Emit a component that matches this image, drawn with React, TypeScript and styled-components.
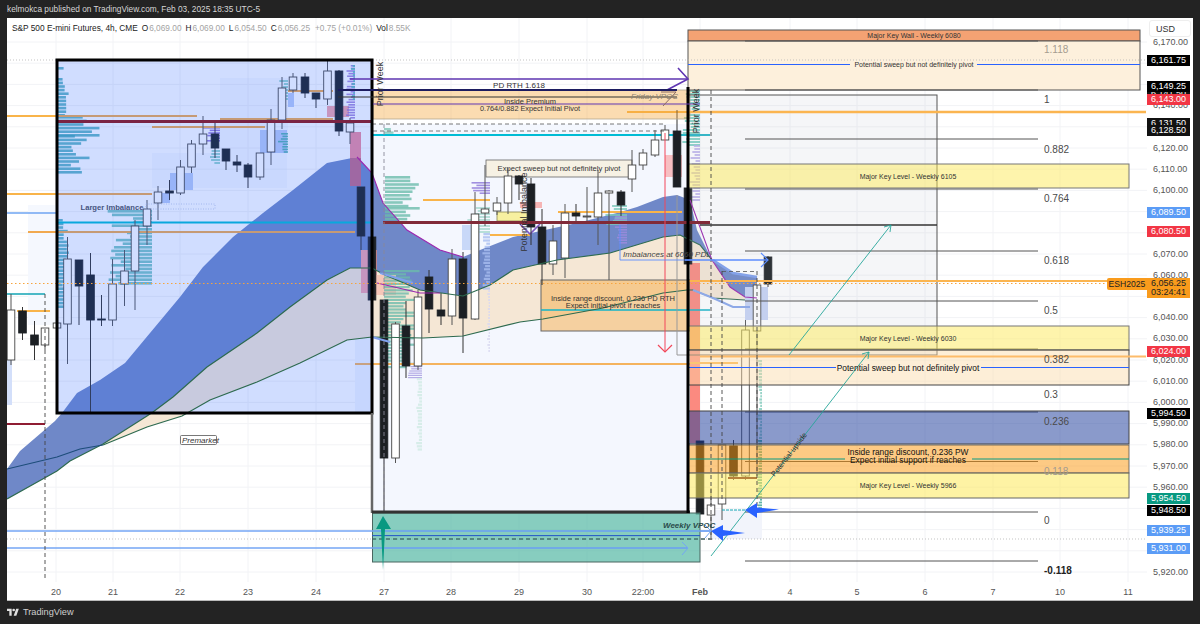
import styled, { createGlobalStyle } from 'styled-components';

const GlobalStyle = createGlobalStyle`
  html, body { margin: 0; padding: 0; background: #232323; }
  body { font-family: "Liberation Sans", Arial, sans-serif; }
`;

const Page = styled.div`
  width: 1200px;
  height: 624px;
  display: flex;
  flex-direction: column;
  overflow: hidden;
  background: #232323;
`;

const TopBar = styled.div`
  height: 18px;
  padding-left: 7px;
  display: flex;
  align-items: center;
  font-size: 8.3px;
  color: #d6d6d6;
`;

const Card = styled.div`
  flex: 1;
  margin: 0 7px;
  background: #fff;
  display: grid;
  grid-template-columns: 1140px 46px;
  grid-template-rows: 564px 18px;
  border-bottom: 1px solid #bbb;
  box-sizing: border-box;
`;

const Pane = styled.div`
  position: relative;
  overflow: hidden;
`;

const ChartSvg = styled.svg`
  display: block;
  font-family: "Liberation Sans", Arial, sans-serif;
`;

const Legend = styled.div`
  position: absolute;
  left: 5px;
  top: 5px;
  display: flex;
  gap: 4px;
  font-size: 8.3px;
  color: #333;
  white-space: nowrap;
`;

const LegendItem = styled.span`
  color: #222;
`;

const LegendValue = styled.span`
  color: #a3a3a3;
  margin-left: 1px;
`;

const SymbolTag = styled.div`
  position: absolute;
  right: 0;
  top: 260px;
  width: 40px;
  height: 12px;
  line-height: 12px;
  text-align: center;
  font-size: 8.6px;
  color: #222;
  background: #f99b1c;
  border-radius: 2px 0 0 2px;
`;

const PriceAxis = styled.div`
  position: relative;
  overflow: hidden;
`;

const UsdButton = styled.div`
  position: absolute;
  left: 2px;
  top: 2px;
  width: 42px;
  height: 17px;
  line-height: 17px;
  padding-left: 6px;
  box-sizing: border-box;
  border: 1px solid #eee;
  border-radius: 3px;
  font-size: 9px;
  color: #333;
  background: #fff;
`;

const PriceTick = styled.div`
  position: absolute;
  left: 6px;
  font-size: 9px;
  line-height: 10px;
  color: #555;
`;

const PriceTag = styled.div<{ $bg: string }>`
  position: absolute;
  left: 0;
  width: 43px;
  height: 11px;
  line-height: 11px;
  text-align: center;
  font-size: 9px;
  color: #fff;
  background: ${(p) => p.$bg};
`;

const LastPriceTag = styled.div`
  position: absolute;
  left: 0;
  top: 260px;
  width: 43px;
  height: 20px;
  padding-top: 1px;
  box-sizing: border-box;
  text-align: center;
  font-size: 9px;
  line-height: 9.5px;
  color: #222;
  background: #f99b1c;
`;

const TimeAxis = styled.div`
  position: relative;
  grid-column: 1 / 3;
`;

const TimeTick = styled.span<{ $bold?: boolean }>`
  position: absolute;
  top: 5px;
  transform: translateX(-50%);
  font-size: 9px;
  color: #555;
  font-weight: ${(p) => (p.$bold ? 700 : 400)};
`;

const BottomBar = styled.div`
  height: 24px;
  padding-left: 7px;
  display: flex;
  align-items: center;
  gap: 4px;
  font-size: 9.2px;
  color: #cfcfcf;
`;

const ZoneLabel = styled.text<{ $size?: number; $color?: string; $bold?: boolean }>`
  font-size: ${(p) => p.$size ?? 7.5}px;
  fill: ${(p) => p.$color ?? '#333'};
  font-weight: ${(p) => (p.$bold ? 700 : 400)};
  text-anchor: middle;
`;

const NoteLabel = styled.text<{ $color?: string; $bold?: boolean }>`
  font-size: 8px;
  font-style: italic;
  fill: ${(p) => p.$color ?? '#444'};
  font-weight: ${(p) => (p.$bold ? 700 : 400)};
`;

const FibLabel = styled.text<{ $strong?: boolean; $faded?: boolean }>`
  font-size: 10px;
  fill: ${(p) => (p.$faded ? '#a59c90' : p.$strong ? '#222' : '#4a4a4a')};
  font-weight: ${(p) => (p.$strong ? 700 : 400)};
`;

const SideLabel = styled.text`
  font-size: 9px;
  fill: #333;
  text-anchor: middle;
`;

type Pt = [number, number];
const toPts = (a: Pt[]) => a.map((p) => p.join(',')).join(' ');

const priceY = (p: number) => 42 + (6170 - p) * 2.12;

const gridX = [56, 113, 180, 248, 316, 384, 451, 519, 587, 643, 700, 790, 857, 925, 993, 1060, 1128];
const timeLabels: [string, number][] = [
  ['20', 56], ['21', 113], ['22', 180], ['23', 248], ['24', 316], ['27', 384], ['28', 451], ['29', 519],
  ['30', 587], ['22:00', 643], ['Feb', 700], ['4', 790], ['5', 857], ['6', 925], ['7', 993], ['10', 1060], ['11', 1128],
];

const priceTicks = [6170, 6140, 6120, 6110, 6100, 6070, 6060, 6040, 6030, 6020, 6010, 6000, 5990, 5980, 5970, 5960, 5920];

const priceTags: [string, number, string][] = [
  ['6,161.75', 60.5, '#000'],
  ['6,141.50', 94, '#111'],
  ['6,149.25', 87, '#000'],
  ['6,143.00', 100, '#f23645'],
  ['6,131.50', 124, '#111'],
  ['6,128.50', 130.5, '#111'],
  ['6,089.50', 213, '#5b9cf6'],
  ['6,080.50', 232, '#f23645'],
  ['6,024.00', 352, '#f23645'],
  ['5,994.50', 414, '#000'],
  ['5,954.50', 499, '#089981'],
  ['5,948.50', 511, '#000'],
  ['5,939.25', 531, '#5b9cf6'],
  ['5,931.00', 548.5, '#5b9cf6'],
];

// cx, body top, body bottom, wick top, wick bottom, dark
type Candle = [number, number, number, number, number, number];
const candles: Candle[] = [
  [11, 310, 360, 294, 365, 0], [22.5, 311, 333, 307, 340, 1], [34.5, 335, 345, 321, 360, 1], [45, 328, 345, 328, 350, 0],
  [57, 323, 328, 323, 328, 0], [67.5, 259, 324, 237, 364, 0], [79, 260, 286, 260, 325, 1], [90.5, 275, 320, 253, 413, 1],
  [101.5, 319, 320, 295, 326, 1], [112.5, 284, 320, 259, 326, 0], [124.5, 271, 284, 250, 306, 0], [135, 226, 271, 220, 310, 0],
  [147, 209, 226, 200, 245, 0], [158, 192, 203, 186, 220, 0], [169.5, 191, 193, 180, 200, 1], [180.5, 167, 193, 160, 195, 0],
  [191.5, 144, 167, 140, 173, 0], [203, 134, 144, 116, 155, 0], [215, 134, 148, 120, 158, 1], [226, 149, 161, 149, 170, 1],
  [237, 162, 165, 155, 172, 1], [248, 165, 177, 163, 188, 1], [260, 153, 177, 153, 180, 0], [271, 120, 152, 109, 165, 0],
  [282, 88, 120, 77, 129, 0], [293, 77, 90, 73, 93, 0], [305, 77, 93, 73, 98, 1], [316, 93, 99, 93, 108, 1],
  [327.5, 71, 99, 60, 105, 0], [339, 71, 131, 70, 136, 1], [350, 123, 132, 118, 144, 0], [361, 187, 236, 187, 250, 1],
  [372, 237, 300, 237, 300, 1],
  [384, 300, 458, 300, 513, 1], [395.5, 324, 458, 322, 463, 0], [406, 326, 366, 301, 378, 1], [418, 297, 366, 290, 370, 0],
  [429, 277, 309, 270, 333, 1], [441, 310, 316, 293, 325, 1], [452, 259, 316, 249, 325, 0], [463, 259, 318, 252, 353, 1],
  [475, 214, 319, 192, 320, 0], [485, 209, 213, 165, 226, 0], [497, 203, 211, 197, 215, 0], [508, 176, 203, 168, 214, 0],
  [519, 176, 184, 175, 200, 1], [531, 184, 227, 178, 245, 1], [542, 227, 264, 209, 285, 1], [553, 241, 264, 225, 275, 0],
  [565, 213, 258, 204, 278, 0], [576, 213, 216, 204, 221, 1], [587, 216, 217, 187, 223, 0], [598, 193, 217, 170, 245, 0],
  [609, 191, 193, 190, 280, 0], [621, 192, 205, 190, 216, 1], [632, 165, 179, 150, 192, 0], [643, 153, 165, 149, 170, 0],
  [655, 140, 155, 130, 157, 0], [665, 130, 140, 125, 140, 0], [677, 131, 187, 110, 187, 1], [688, 188, 264, 90, 265, 1],
  [700, 441, 514, 441, 514, 1], [711, 505, 515, 488, 540, 0], [722, 445, 504, 445, 520, 0], [733.5, 446, 476, 440, 480, 1],
  [745.5, 330, 476, 320, 480, 0], [757, 285, 331, 285, 476, 0], [768, 257, 284, 256, 287, 1],
];

const blueTop: Pt[] = [
  [7, 469], [20, 451], [55, 421], [62, 413], [77, 393], [100, 380], [125, 363], [150, 333], [180, 297], [203, 267], [233, 237],
  [263, 213], [293, 190], [327, 163], [357, 157], [372, 173], [383, 203], [407, 230], [440, 250], [463, 257], [480, 250],
  [513, 237], [577, 223], [617, 213], [637, 207], [663, 197], [677, 195], [690, 200], [697, 230], [712, 260],
];
const greenOne: Pt[] = [
  [7, 499], [57, 471], [70, 461], [103, 444], [147, 416], [153, 412], [173, 397], [207, 367], [257, 333], [290, 307], [327, 280],
  [350, 268], [372, 268], [385, 275], [420, 290], [463, 296], [490, 285], [513, 270], [557, 260], [610, 253], [663, 237], [680, 235],
  [700, 245], [712, 260],
];
const greenTwo: Pt[] = [
  [103, 445], [147, 427], [182, 416], [210, 400], [257, 382], [300, 363], [347, 340], [372, 337], [423, 338], [463, 336], [520, 322],
  [543, 319], [603, 308], [663, 293], [687, 290], [693, 290], [713, 298], [745, 300],
];
const creamEdge: Pt[] = greenOne.slice(3).concat([[730, 287], [745, 297]] as Pt[]);
const blueTail: Pt[] = [[712, 260], [733, 273], [757, 277], [757, 297], [745, 297], [730, 287]];

// x, y1, y2, colour, seed, width, step; bars grow from x, negative width goes left
type Profile = [number, number, number, string, number, number, number];
const profiles: Profile[] = [
  [58, 67, 70, '#3fa5b5', 1, 11, 3.6],
  [58, 78, 115, '#3fa5b5', 2, 11, 3.6],
  [58, 116, 135, '#3fa5b5', 3, 44, 3.6],
  [58, 135, 173, '#3fa5b5', 4, 32, 3.6],
  [58, 219, 307, '#3fa5b5', 5, 11, 3.6],
  [152, 210, 285, '#5cb8b6', 6, -45, 3.6],
  [355, 65, 117, '#8e6fd6', 7, -9, 2.6],
  [355, 65, 100, '#54bdb4', 8, -4, 3],
  [220, 127, 141, '#7d5fd8', 9, -18, 2.6],
  [220, 150, 165, '#7cc8c4', 10, -10, 3],
  [288, 80, 100, '#7cc8c4', 11, -10, 3],
  [288, 133, 153, '#3ca9a0', 12, -10, 2.6],
  [384, 128, 134, '#7ec4b6', 13, 12, 3.4],
  [385, 176, 207, '#6cbcab', 14, 36, 3.6],
  [385, 207, 222, '#6cbcab', 15, 45, 3.6],
  [384, 270, 366, '#6cbcab', 16, 36, 3.2],
  [422, 366, 378, '#a59ae0', 17, -14, 2.2],
  [422, 378, 450, '#cfeae4', 18, -6, 3.2],
  [490, 182, 193, '#8b74d8', 19, -20, 2.6],
  [490, 207, 233, '#a8d8d0', 20, -26, 3],
  [490, 233, 290, '#a7bdf0', 21, -8, 3.2],
  [490, 290, 352, '#d8d8f0', 22, -3, 3],
  [627, 205, 225, '#7cc8bc', 23, -22, 3],
  [627, 216, 242, '#a08be0', 24, -18, 2.6],
  [700, 90, 145, '#6cc8bc', 25, -19, 3],
  [700, 145, 200, '#b9aeea', 26, -10, 3],
  [762, 360, 440, '#7ec9ba', 27, -4, 3.2],
  [762, 440, 512, '#3aa494', 28, -5, 2.8],
];

const pseudo = (i: number, seed: number) => {
  const v = Math.sin(i * 12.9898 + seed * 78.233) * 43758.5453;
  return 0.4 + 0.6 * (v - Math.floor(v));
};

// x1, x2, y, colour, stroke width, dash
type Level = [number, number, number, string, number, string?];
const lowLevels: Level[] = [
  [7, 57, 116, '#f9b44a', 2], [57, 197, 116, '#f1a94f', 2], [152, 265, 127, '#f1a94f', 2], [220, 333, 119, '#f1a94f', 2],
  [288, 333, 91, '#f1a94f', 2], [7, 57, 194, '#f9b44a', 2], [57, 152, 194, '#f1a94f', 2], [28, 355, 232, '#f1a94f', 2],
  [17, 50, 311, '#f9b44a', 2], [355, 690, 364, '#f4b35e', 2], [423, 490, 200, '#f9b44a', 2], [490, 530, 235, '#f9b44a', 2],
  [558, 682, 212, '#f9b44a', 2], [627, 710, 112, '#f9b44a', 2], [690, 738, 363, '#f9b44a', 2],
  [57, 372, 222.5, '#00bcd4', 1.8], [372, 677, 135, '#00bcd4', 2], [677, 710, 135, '#26b6c6', 2],
  [541, 710, 310, '#12b5c9', 1.4], [7, 45, 294, '#12a4b4', 1.6], [7, 57, 213, '#6ea4f2', 1.5],
];

const highLevels: Level[] = [
  [57, 372, 121.5, '#7a2444', 3], [383, 710, 222.5, '#812a38', 3], [7, 45, 424, '#8f1c32', 2],
  [7, 710, 531, '#74a6f4', 1.6], [7, 688, 548, '#74a6f4', 1.6], [372, 700, 535.6, '#2a5cc9', 1],
  [372, 710, 539, '#3b5a5a', 1, '4 3'], [7, 1146, 539, '#b4b4b4', 0.8, '1 2'], [7, 1146, 60, '#b4b4b4', 0.8, '1 2'],
  [372, 665, 124, '#555', 0.8, '4 3'], [373, 665, 131, '#555', 0.8, '4 3'], [722, 757, 271.5, '#555', 0.8, '4 3'],
  [722, 745, 510, '#12a4b4', 1, '3 1'], [689, 1146, 112, '#fbb550', 2.4], [689, 1146, 281, '#fbb550', 2.2],
  [700, 1146, 356.5, '#fdbb6a', 2], [7, 1146, 283.5, '#f7a43c', 1, '1.5 2.5'],
];

const fibLines = [41, 90, 139, 189, 251, 301, 349, 412, 461.5, 512, 561];
const fibLabels: [string, number, boolean?, boolean?][] = [
  ['1.118', 53, false, true], ['1', 103], ['0.882', 153], ['0.764', 202], ['0.618', 264], ['0.5', 314], ['0.382', 363],
  ['0.3', 398], ['0.236', 425], ['0.118', 475, false, true], ['0', 524], ['-0.118', 574, true],
];

function Chevron({ pts, color, w = 1.6 }: { pts: Pt[]; color: string; w?: number }) {
  return <polyline points={toPts(pts)} fill="none" stroke={color} strokeWidth={w} />;
}

function Levels({ items }: { items: Level[] }) {
  return (
    <>
      {items.map(([x1, x2, y, c, w, dash], i) => (
        <line key={i} x1={x1} x2={x2} y1={y} y2={y} stroke={c} strokeWidth={w} strokeDasharray={dash} />
      ))}
    </>
  );
}

function Chart() {
  return (
    <ChartSvg width={1140} height={564} viewBox="7 18 1140 564">
      {gridX.map((x) => (
        <line key={x} x1={x} x2={x} y1={18} y2={582} stroke="#f2f3f6" />
      ))}
      {priceTicks.concat([6160, 6150, 6130, 6090, 6080, 6050, 5950, 5940, 5930]).map((p) => (
        <line key={p} x1={7} x2={1147} y1={priceY(p)} y2={priceY(p)} stroke="#f2f3f6" />
      ))}

      {/* pale session blocks */}
      <rect x={28} y={205} width={29} height={120} fill="#f5f8fe" />
      <rect x={7} y={360} width={5} height={45} fill="#d3dffa" />
      <rect x={355} y={232} width={17} height={180} fill="#f3f6fe" />
      <rect x={372} y={124} width={316} height={388} fill="#f4f7fe" />
      <rect x={712} y={510} width={50} height={29} fill="#f2f4fb" />

      {/* ema ribbon */}
      <polygon points={toPts([...creamEdge, ...[...greenTwo].reverse()])} fill="#f5e7d5" />
      <polygon points={toPts([...blueTop, ...[...greenOne].reverse()])} fill="#6f88c8" />
      <polygon points={toPts(blueTail)} fill="#6f88c8" />

      <rect x={541} y={280} width={149} height={51} fill="#f5b866" fillOpacity={0.62} stroke="#666" />

      {/* liquidity blocks */}
      <rect x={260} y={130} width={27} height={23} fill="#b8cbf8" />
      <rect x={170} y={173} width={23} height={17} fill="#b8cbf8" />
      <rect x={157} y={193} width={13} height={10} fill="#b8cbf8" />
      <rect x={288} y={93} width={6} height={14} fill="#b8cbf8" />
      <rect x={220} y={78} width={68} height={75} fill="#c0cffa" fillOpacity={0.12} />
      <rect x={152} y={153} width={135} height={35} fill="#c0cffa" fillOpacity={0.12} />
      <rect x={462} y={225} width={18} height={25} fill="#c8d8f8" />
      <rect x={520} y={202} width={22} height={6} fill="#f6b5b5" />
      <rect x={665} y={155} width={17} height={22} fill="#f7bfc2" />
      <rect x={745} y={287} width={23} height={33} fill="#c8d4f5" />
      <rect x={327} y={106} width={22} height={11} fill="#f2a5ae" />
      <rect x={350} y={132} width={11} height={54} fill="#ee8ba0" />
      <rect x={350} y={158} width={11} height={28} fill="#c06a8a" />
      <rect x={361} y={250} width={16} height={43} fill="#f3a3ae" />
      <rect x={376} y={275} width={20} height={20} fill="#f5c6b8" />
      <rect x={690} y={263} width={10} height={180} fill="#fb8a80" />

      {profiles.map(([x, y1, y2, color, seed, w, step]) => {
        const bars = [];
        for (let y = y1, i = 0; y < y2; y += step, i++) {
          const len = Math.abs(w) * pseudo(i, seed);
          bars.push(<rect key={i} x={w < 0 ? x - len : x} y={y} width={len} height={step - 1} fill={color} fillOpacity={0.8} />);
        }
        return <g key={seed}>{bars}</g>;
      })}

      <Levels items={lowLevels} />

      {/* note boxes under the candles */}
      <rect x={486} y={160} width={146} height={17} fill="#f6f1e4" stroke="#666" strokeWidth={0.8} />
      <rect x={497} y={212} width={33} height={9} fill="#f7f0a0" stroke="#8a8650" strokeWidth={0.8} />
      <Chevron pts={[[520, 224], [530, 234], [540, 224]]} color="#7e57c2" />

      {candles.map(([cx, top, bottom, wt, wb, dark], i) => (
        <g key={i}>
          <line x1={cx} x2={cx} y1={wt} y2={wb} stroke={dark ? '#333' : '#555'} strokeWidth={1} />
          <rect
            x={cx - 3.8}
            y={top}
            width={7.6}
            height={Math.max(bottom - top, 1)}
            fill={dark ? '#1c2024' : '#fff'}
            stroke={dark ? '#1c2024' : '#444'}
            strokeWidth={0.9}
          />
        </g>
      ))}

      {/* weekly frame tint, goes over the candles */}
      <rect x={57} y={60} width={315} height={353} fill="#2962ff" fillOpacity={0.22} />

      {/* ribbon edges */}
      <polyline points={toPts(greenOne)} fill="none" stroke="#2d6a4f" strokeWidth={1.2} />
      <polyline points={toPts(greenTwo)} fill="none" stroke="#2d6a4f" strokeWidth={1.2} />
      <polyline points={toPts([[7, 469], [57, 457], [80, 449], [103, 445]])} fill="none" stroke="#1d4d7a" strokeWidth={1.2} />
      <polyline points={toPts(blueTop.slice(14, 20))} fill="none" stroke="#9c27b0" strokeWidth={1.1} />
      <polyline points={toPts([[377, 283], [420, 293], [440, 293]])} fill="none" stroke="#9c27b0" strokeWidth={1.1} />
      <polyline points={toPts([[690, 200], [712, 260], [730, 287], [745, 297], [757, 298]])} fill="none" stroke="#9c27b0" strokeWidth={1.1} />
      <polyline points={toPts([[372, 337], [390, 342]])} fill="none" stroke="#7fa0ee" strokeWidth={2} />
      <polyline points={toPts([[380, 273], [413, 283]])} fill="none" stroke="#7fa0ee" strokeWidth={2} />
      <polyline points={toPts([[713, 260], [733, 273], [757, 277]])} fill="none" stroke="#7fa0ee" strokeWidth={2.5} />
      <polyline points={toPts([[693, 290], [713, 298], [733, 307], [750, 307]])} fill="none" stroke="#8aa8ec" strokeWidth={2} />

      {/* premium zone */}
      <rect x={373} y={90} width={317} height={29} fill="#f4a73c" fillOpacity={0.4} stroke="#b3a890" strokeWidth={0.8} />

      {/* right side zones */}
      <rect x={688} y={95} width={249} height={260} fill="#aab4c8" fillOpacity={0.12} stroke="#555" strokeWidth={1} />
      <rect x={688} y={30} width={452} height={11} fill="#f4a273" stroke="#555" strokeWidth={1} />
      <rect x={688} y={41} width={452} height={49} fill="#fdf0dc" stroke="#555" strokeWidth={1} />
      <Levels items={[
        [688, 850, 64.5, '#2962ff', 1], [977, 1140, 64.5, '#2962ff', 1],
        [700, 937, 225, '#333', 1.6],
      ]} />
      {fibLines.map((y) => (
        <line key={y} x1={745} x2={1038} y1={y} y2={y} stroke="#555" strokeWidth={1} />
      ))}
      <rect x={688} y={164} width={441} height={24} fill="#fde95a" fillOpacity={0.5} stroke="#777" strokeWidth={1} />
      <rect x={688} y={326} width={441} height={24} fill="#fde95a" fillOpacity={0.5} stroke="#777" strokeWidth={1} />
      <rect x={688} y={350} width={441} height={35} fill="#fbd9a6" fillOpacity={0.45} stroke="#444" strokeWidth={1} />
      <rect x={688} y={411} width={441} height={33} fill="#1f3d9c" fillOpacity={0.52} stroke="#444" strokeWidth={1} />
      <rect x={688} y={445} width={441} height={28} fill="#fb9a14" fillOpacity={0.52} stroke="#555" strokeWidth={0.8} />
      <rect x={688} y={473} width={441} height={25} fill="#fde95a" fillOpacity={0.55} stroke="#666" strokeWidth={1} />
      <Levels items={[
        [688, 836, 367.5, '#2962ff', 1], [981, 1129, 367.5, '#2962ff', 1],
        [690, 845, 459, '#089981', 1.2], [972, 1129, 459, '#089981', 1.2],
        [728, 757, 478, '#b8813c', 2],
      ]} />

      <Levels items={highLevels} />

      {/* grey box by the Feb open */}
      <polyline points={toPts([[677, 195], [677, 355], [688, 355]])} fill="none" stroke="#999" strokeWidth={1} />

      {/* dashed session marks */}
      <line x1={45} x2={45} y1={294} y2={580} stroke="#444" strokeWidth={0.9} strokeDasharray="4 3" />
      <line x1={384} x2={384} y1={124} y2={513} stroke="#889" strokeWidth={0.9} strokeDasharray="4 3" />
      <line x1={711} x2={711} y1={90} y2={540} stroke="#444" strokeWidth={0.9} strokeDasharray="4 3" />
      <line x1={722} x2={722} y1={271} y2={500} stroke="#444" strokeWidth={0.9} strokeDasharray="4 3" />
      <line x1={757} x2={757} y1={271} y2={510} stroke="#444" strokeWidth={0.9} strokeDasharray="4 3" />

      {/* frames */}
      <rect x={57} y={60} width={315} height={353} fill="none" stroke="#000" strokeWidth={3} />
      <line x1={372} x2={372} y1={413} y2={513} stroke="#666" strokeWidth={2.5} />

      <rect x={372.5} y={513} width={327.5} height={49} fill="#54b8a4" fillOpacity={0.7} stroke="#4a6660" strokeWidth={1} />
      <line x1={372} x2={690} y1={512} y2={512} stroke="#333" strokeWidth={3} />
      <line x1={688} x2={688} y1={87} y2={513} stroke="#000" strokeWidth={3} />
      <Levels items={[
        [372, 711, 531, '#74a6f4', 1.6], [372, 688, 548, '#74a6f4', 1.6], [372, 700, 535.6, '#2a5cc9', 1],
        [372, 710, 539, '#3b5a5a', 1, '4 3'],
      ]} />

      {/* purple PD RTH lines */}
      <line x1={350} x2={688} y1={79} y2={79} stroke="#5e35b1" strokeWidth={1.6} />
      <Chevron pts={[[678, 68], [688, 79], [667, 90]]} color="#5e35b1" />
      <line x1={338} x2={677} y1={90} y2={90} stroke="#1c1c60" strokeWidth={1.8} />
      <line x1={338} x2={677} y1={97} y2={97} stroke="#333" strokeWidth={1.2} />
      <line x1={373} x2={700} y1={104} y2={104} stroke="#5e35b1" strokeWidth={1} />

      {/* arrows */}
      <line x1={665} x2={665} y1={133} y2={352} stroke="#f2475a" strokeWidth={1} />
      <Chevron pts={[[658, 345], [665, 352], [672, 345]]} color="#f2475a" w={1.2} />
      <Chevron pts={[[661, 92], [676, 92], [663, 106]]} color="#8d6e63" w={1} />
      <Chevron pts={[[682, 542], [688, 548], [682, 555]]} color="#74a6f4" w={1} />
      <Chevron pts={[[705, 525], [711, 531], [705, 538]]} color="#74a6f4" w={1} />
      <line x1={685} x2={768} y1={260} y2={260} stroke="#5c8dff" strokeWidth={1.6} />
      <line x1={620} x2={620} y1={225} y2={260} stroke="#5c8dff" strokeWidth={0.9} />
      <line x1={620} x2={700} y1={260} y2={260} stroke="#5c8dff" strokeWidth={0.9} />
      <Chevron pts={[[761, 253], [768, 260], [761, 267]]} color="#5c8dff" w={1.2} />

      <line x1={789} x2={891} y1={355} y2={225} stroke="#26a69a" strokeWidth={0.9} />
      <Chevron pts={[[884, 227], [891, 225], [890, 232]]} color="#26a69a" w={0.9} />
      <line x1={711} x2={869} y1={556} y2={352} stroke="#26a69a" strokeWidth={0.9} />
      <Chevron pts={[[862, 354], [869, 352], [868, 359]]} color="#26a69a" w={0.9} />

      <polygon points={toPts([[745, 510], [757, 503], [757, 507.5], [779, 509.5], [757, 513], [757, 518]])} fill="#2962ff" />
      <polygon points={toPts([[711, 531], [723, 525], [723, 530], [745, 533], [723, 536], [723, 541]])} fill="#2962ff" />
      <polygon points={toPts([[383, 516], [391, 529], [385, 529], [383, 570], [381, 529], [376, 529]])} fill="#089981" />

      {/* labels */}
      <ZoneLabel x={519} y={87.5} $size={8}>PD RTH 1.618</ZoneLabel>
      <ZoneLabel x={530} y={104} $size={7.5}>Inside Premium</ZoneLabel>
      <ZoneLabel x={530} y={111} $size={7.3}>0.764/0.882 Expect Initial Pivot</ZoneLabel>
      <ZoneLabel x={559} y={171} $size={7.6}>Expect sweep but not definitely pivot</ZoneLabel>
      <ZoneLabel x={613} y={301} $size={7.5}>Inside range discount, 0.236 PD RTH</ZoneLabel>
      <ZoneLabel x={613} y={308} $size={7.5}>Expect initial pivot if reaches</ZoneLabel>
      <ZoneLabel x={914} y={38} $size={7}>Major Key Wall - Weekly 6080</ZoneLabel>
      <ZoneLabel x={914} y={67} $size={7}>Potential sweep but not definitely pivot</ZoneLabel>
      <ZoneLabel x={908} y={178.5} $size={7}>Major Key Level - Weekly 6105</ZoneLabel>
      <ZoneLabel x={908} y={340.5} $size={7}>Major Key Level - Weekly 6030</ZoneLabel>
      <ZoneLabel x={908} y={371} $size={8.4} $color="#111">Potential sweep but not definitely pivot</ZoneLabel>
      <ZoneLabel x={908} y={455} $size={8.4} $color="#111">Inside range discount, 0.236 PW</ZoneLabel>
      <ZoneLabel x={908} y={463} $size={8.4} $color="#111">Expect initial support if reaches</ZoneLabel>
      <ZoneLabel x={908} y={487.5} $size={7}>Major Key Level - Weekly 5966</ZoneLabel>
      <ZoneLabel x={112} y={210} $size={7.6} $color="#46557f" $bold>Larger Imbalance</ZoneLabel>
      <rect x={146} y={204} width={69} height={5} fill="none" stroke="#8fa7e8" strokeWidth={0.7} strokeDasharray="1 1.5" />

      <rect x={180.5} y={435.5} width={36} height={9} fill="#fff" stroke="#555" strokeWidth={0.8} rx={1} />
      <NoteLabel x={182} y={443} $color="#333">Premarket</NoteLabel>
      <NoteLabel x={623} y={257}>Imbalances at 6060 PDL</NoteLabel>
      <NoteLabel x={631} y={99} $color="#8a8272">Friday VPOC</NoteLabel>
      <NoteLabel x={663} y={528} $color="#2a4a4a" $bold>Weekly VPOC</NoteLabel>

      <SideLabel transform="translate(382.5 84) rotate(-90)">Prior Week</SideLabel>
      <SideLabel transform="translate(699 111) rotate(-90)">Prior Week</SideLabel>
      <SideLabel transform="translate(527 212) rotate(-90)">Potential Imbalance</SideLabel>
      <ZoneLabel transform="translate(791 456) rotate(-52)" $size={7.5}>Potential upside</ZoneLabel>

      {fibLabels.map(([t, y, strong, faded]) => (
        <FibLabel key={t} x={1044} y={y} $strong={strong} $faded={faded}>{t}</FibLabel>
      ))}
    </ChartSvg>
  );
}

export default function App() {
  return (
    <Page>
      <GlobalStyle />
      <TopBar>kelmokca published on TradingView.com, Feb 03, 2025 18:35 UTC-5</TopBar>
      <Card>
        <Pane>
          <Chart />
          <Legend>
            <LegendItem>S&amp;P 500 E-mini Futures, 4h, CME</LegendItem>
            <LegendItem>O<LegendValue>6,069.00</LegendValue></LegendItem>
            <LegendItem>H<LegendValue>6,069.00</LegendValue></LegendItem>
            <LegendItem>L<LegendValue>6,054.50</LegendValue></LegendItem>
            <LegendItem>C<LegendValue>6,056.25</LegendValue></LegendItem>
            <LegendValue>+0.75 (+0.01%)</LegendValue>
            <LegendItem>Vol<LegendValue>8.55K</LegendValue></LegendItem>
          </Legend>
          <SymbolTag>ESH2025</SymbolTag>
        </Pane>
        <PriceAxis>
          <UsdButton>USD</UsdButton>
          {priceTicks.map((p) => (
            <PriceTick key={p} style={{ top: priceY(p) - 23 }}>{p.toLocaleString('en-US', { minimumFractionDigits: 2 })}</PriceTick>
          ))}
          {priceTags.map(([t, y, bg]) => (
            <PriceTag key={t} $bg={bg} style={{ top: y - 23.5 }}>{t}</PriceTag>
          ))}
          <LastPriceTag>6,056.25<br />03:24:41</LastPriceTag>
        </PriceAxis>
        <TimeAxis>
          {timeLabels.map(([t, x]) => (
            <TimeTick key={t} $bold={t === 'Feb'} style={{ left: x - 7 }}>{t}</TimeTick>
          ))}
        </TimeAxis>
      </Card>
      <BottomBar>
        <svg width="12" height="10" viewBox="0 0 36 28">
          <path fill="#e0e0e0" d="M14 25H7V11H0V4h14v21zM28 25h-8l7.5-21h8L28 25z" />
          <circle fill="#e0e0e0" cx="20" cy="8" r="4" />
        </svg>
        TradingView
      </BottomBar>
    </Page>
  );
}
